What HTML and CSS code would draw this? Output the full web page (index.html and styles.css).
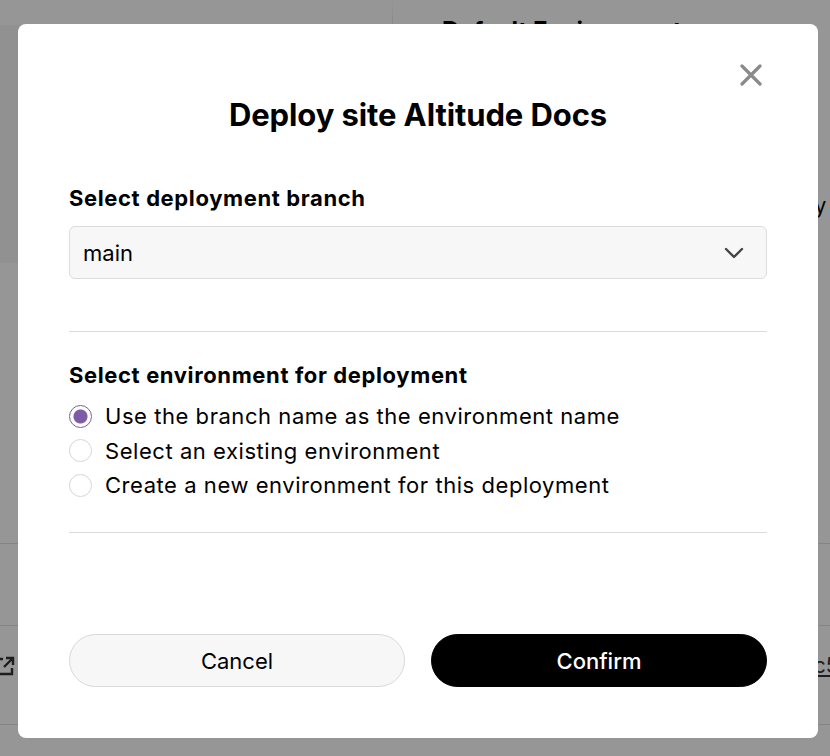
FILE: index.html
```html
<!DOCTYPE html>
<html>
<head>
<meta charset="utf-8">
<link rel="stylesheet" href="styles.css">
</head>
<body>
<div class="page">
  <div class="page-top">
    <div class="page-top-left"></div>
    <div class="page-top-right"><span class="page-heading">Default Environment</span></div>
  </div>
  <span class="page-y">Deploy</span>
  <div class="page-rows">
    <div class="page-row"></div>
    <div class="page-row row-links">
      <svg class="ext" width="22" height="22" viewBox="0 0 22 22"><path d="M9 4H3v15h15v-6M12 3h7v7M19 3l-9 9" fill="none" stroke="#333" stroke-width="2.4"/></svg>
      <span class="hash">c5a1</span>
    </div>
  </div>
</div>
<div class="backdrop"></div>
<div class="modal">
  <button class="close" aria-label="Close">
    <svg width="22" height="22" viewBox="0 0 22 22"><path d="M2 2L20 20M20 2L2 20" stroke="#8a8a8a" stroke-width="3.2" stroke-linecap="round"/></svg>
  </button>
  <h1 class="title">Deploy site Altitude Docs</h1>
  <div class="label first">Select deployment branch</div>
  <div class="select">
    <span>main</span>
    <svg width="20" height="12" viewBox="0 0 20 12"><path d="M2 2L10 10L18 2" fill="none" stroke="#444" stroke-width="2.4" stroke-linecap="round" stroke-linejoin="round"/></svg>
  </div>
  <div class="divider d1"></div>
  <div class="label second">Select environment for deployment</div>
  <div class="radios">
    <label class="radio"><span class="dot checked"></span>Use the branch name as the environment name</label>
    <label class="radio"><span class="dot"></span>Select an existing environment</label>
    <label class="radio"><span class="dot"></span>Create a new environment for this deployment</label>
  </div>
  <div class="divider d2"></div>
  <div class="actions">
    <button class="btn cancel">Cancel</button>
    <button class="btn confirm">Confirm</button>
  </div>
</div>
</body>
</html>
```
FILE: styles.css
```css
* { box-sizing: border-box; }
html, body { margin: 0; padding: 0; }
body {
  width: 830px;
  height: 756px;
  overflow: hidden;
  font-family: Inter, "Liberation Sans", sans-serif;
  background: #ffffff;
  position: relative;
}
.page { width: 830px; height: 756px; display: flex; flex-direction: column; }
.page-top { display: flex; height: 263px; }
.page-top-left { width: 393px; border-right: 1px solid #e8e8e8; border-top: 25px solid #fff; background: #f6f6f6; }
.page-top-right { flex: 1; padding: 16px 0 0 49px; }
.page-heading { font-weight: 700; font-size: 24px; color: #000; }
.page-y { position: absolute; left: 757px; top: 193px; font-size: 21px; color: #000; }
.page-rows { display: flex; flex-direction: column; margin-top: 280px; }
.page-row { height: 82px; border-top: 1px solid #e0e0e0; }
.row-links { height: 100px; border-bottom: 1px solid #e0e0e0; display: flex; align-items: center; justify-content: space-between; }
.ext { margin-left: -6px; margin-top: -18px; }
.hash { font-size: 21px; text-decoration: underline; color: #333; margin-right: -28px; margin-top: -20px; }
.backdrop {
  position: absolute; inset: 0;
  background: rgba(0,0,0,0.41);
}
.modal {
  position: absolute;
  left: 18px; top: 24px;
  width: 800px; height: 714px;
  background: #fff;
  border-radius: 8px;
  padding: 73px 51px 51px;
  display: flex; flex-direction: column;
  color: #000;
}
.close {
  position: absolute; right: 52px; top: 36px;
  width: 30px; height: 30px;
  border: 0; background: none; padding: 4px; cursor: pointer;
}
.title {
  margin: 0;
  font-size: 31px; line-height: 36px; font-weight: 700;
  text-align: center;
  letter-spacing: -0.1px;
}
.label { font-size: 22px; line-height: 24px; font-weight: 700; letter-spacing: 0.62px; }
.label.first { margin-top: 53px; }
.select {
  margin-top: 16px;
  height: 53px;
  background: #f7f7f7;
  border: 1px solid #dcdcdc;
  border-radius: 6px;
  display: flex; align-items: center; justify-content: space-between;
  padding: 0 22px 0 13px;
  font-size: 22px;
}
.divider { height: 1px; background: #dadada; }
.d1 { margin-top: 52px; }
.label.second { margin-top: 31px; }
.radios { margin-top: 12px; display: flex; flex-direction: column; }
.radio {
  height: 34.5px;
  display: flex; align-items: center;
  font-size: 22px;
  letter-spacing: 0.55px;
  gap: 13px;
}
.dot {
  width: 23px; height: 23px; border-radius: 50%;
  border: 1px solid #d6d6d6;
  background: #fff;
  flex: none;
}
.dot.checked {
  border: 1.5px solid #7d5ba6;
  background: radial-gradient(circle, #7d5ba6 0 6.5px, #fff 7.5px);
}
.d2 { margin-top: 29px; }
.actions {
  margin-top: auto;
  display: grid; grid-template-columns: 1fr 1fr; gap: 26px;
}
.btn {
  height: 53px; border-radius: 27px;
  font-family: Inter, "Liberation Sans", sans-serif;
  font-size: 22px;
  cursor: pointer;
}
.cancel { background: #f7f7f7; border: 1px solid #d9d9d9; color: #000; }
.confirm { background: #000; border: 1px solid #000; color: #fff; font-weight: 500; }
```
